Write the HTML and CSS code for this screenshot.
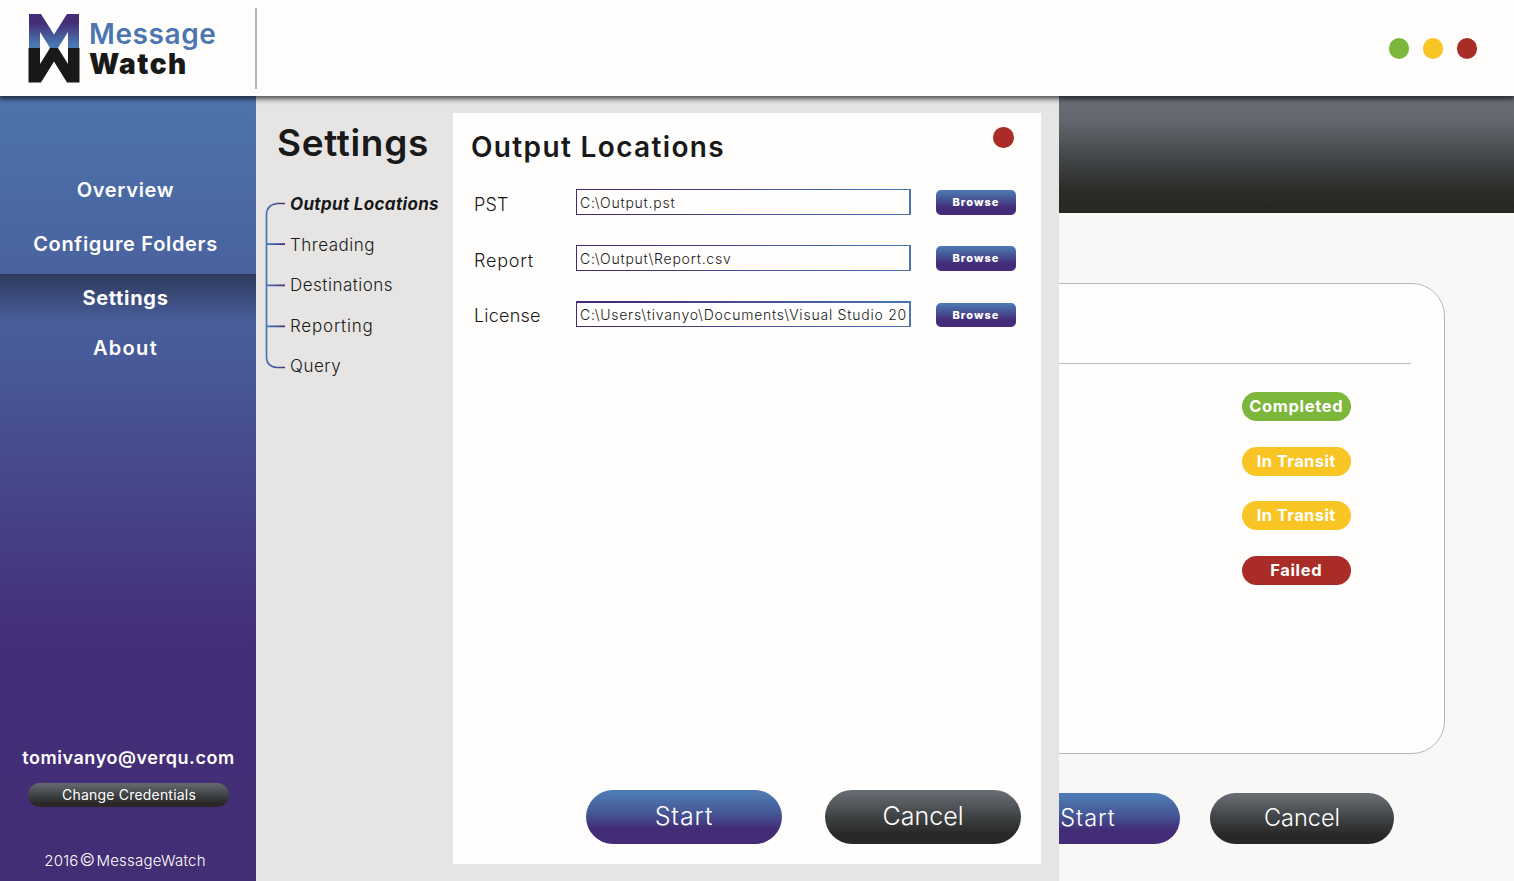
FILE: index.html
```html
<!DOCTYPE html>
<html lang="en">
<head>
<meta charset="utf-8">
<title>MessageWatch</title>
<link rel="stylesheet" href="styles.css">
</head>
<body>
<div class="app">
  <header class="header">
    <div class="brand">
      <svg class="logo" width="52" height="70" viewBox="0 0 52 70">
        <defs>
          <linearGradient id="logoFill" x1="0" y1="0" x2="0" y2="1">
            <stop offset="0.25" stop-color="#442c77"/>
            <stop offset="0.9" stop-color="#4a78b3"/>
          </linearGradient>
        </defs>
        <path fill="url(#logoFill)" d="M1 1H13L26 21.500L39 1H51V35H40V19L30 35H22L12 19V35H1Z"/>
        <path fill="#191919" d="M0.500 35H12V51L22 35H30L40 51V35H51.500V69.500H39L26 48.500L13 69.500H0.500Z"/>
      </svg>
      <div class="wordmark">
        <span class="word-message">Message</span>
        <span class="word-watch">Watch</span>
      </div>
    </div>
    <div class="window-dots">
      <span class="dot green"></span>
      <span class="dot yellow"></span>
      <span class="dot red"></span>
    </div>
  </header>

  <div class="body">
    <aside class="sidebar">
      <nav class="nav">
        <a class="nav-item">Overview</a>
        <a class="nav-item">Configure Folders</a>
        <a class="nav-item active">Settings</a>
        <a class="nav-item about">About</a>
      </nav>
      <div class="account">
        <div class="email">tomivanyo@verqu.com</div>
        <button class="credentials">Change Credentials</button>
        <div class="copyright">2016<span class="copy-mark">©</span>MessageWatch</div>
      </div>
    </aside>

    <main class="main">
      <div class="banner"></div>
      <section class="card">
        <div class="card-head"></div>
        <div class="statuses">
          <span class="pill green">Completed</span>
          <span class="pill yellow transit">In Transit</span>
          <span class="pill yellow transit">In Transit</span>
          <span class="pill red">Failed</span>
        </div>
      </section>
      <div class="main-actions">
        <button class="action small primary">Start</button>
        <button class="action small dark">Cancel</button>
      </div>
    </main>

    <section class="settings">
      <div class="settings-menu">
        <h1 class="settings-title">Settings</h1>
        <div class="tree">
          <svg class="tree-lines" width="22" height="168" viewBox="0 0 22 168" fill="none" stroke-width="1.700">
            <defs>
              <linearGradient id="branch" gradientUnits="userSpaceOnUse" x1="2" y1="0" x2="20" y2="0">
                <stop offset="0" stop-color="#4b76b3"/>
                <stop offset="1" stop-color="#432b77"/>
              </linearGradient>
            </defs>
            <g stroke="url(#branch)">
              <path d="M20 1.500H12.500Q1.500 2.500 1.500 13V155Q1.500 164.500 12 165.500H20"/>
              <path d="M2 42.200H20M2 83.400H20M2 124.300H20"/>
            </g>
          </svg>
          <ul class="tree-items">
            <li class="current">Output Locations</li>
            <li>Threading</li>
            <li>Destinations</li>
            <li class="loose">Reporting</li>
            <li>Query</li>
          </ul>
        </div>
      </div>

      <div class="sheet">
        <div class="sheet-head">
          <h2 class="sheet-title">Output Locations</h2>
          <span class="dot red"></span>
        </div>
        <div class="fields">
          <label class="label">PST</label>
          <div class="field">C:\Output.pst</div>
          <button class="browse">Browse</button>
          <label class="label loose">Report</label>
          <div class="field">C:\Output\Report.csv</div>
          <button class="browse">Browse</button>
          <label class="label last">License</label>
          <div class="field thick">C:\Users\tivanyo\Documents\Visual Studio 20</div>
          <button class="browse last">Browse</button>
        </div>
        <div class="sheet-actions">
          <button class="action primary">Start</button>
          <button class="action dark">Cancel</button>
        </div>
      </div>
    </section>
  </div>
</div>
</body>
</html>
```
FILE: styles.css
```css
* { box-sizing: border-box; }

body {
  margin: 0;
  font-family: Inter, "Open Sans", "Liberation Sans", sans-serif;
  color: #191919;
  background: #f9f8f8;
}

button {
  border: 0;
  padding: 0;
  font-family: inherit;
  color: #fff;
}

.app {
  display: flex;
  flex-direction: column;
  width: 1514px;
  height: 881px;
  overflow: hidden;
  white-space: nowrap;
}

/* Header */
.header {
  position: relative;
  z-index: 3;
  flex: none;
  height: 96px;
  display: flex;
  justify-content: space-between;
  padding-right: 37px;
  background: #fffefd;
  box-shadow: 0 2px 5px 1px rgba(0, 0, 0, 0.65);
}

.brand {
  display: flex;
  align-items: flex-start;
  width: 257px;
  height: 81px;
  margin-top: 8px;
  padding: 5px 0 0 28px;
  border-right: 2px solid #b4b4b4;
}

.wordmark {
  display: flex;
  flex-direction: column;
  margin: 6px 0 0 9px;
  font-size: 28px;
  line-height: 30px;
}

.word-message {
  color: #4b76b2;
  font-weight: 600;
  letter-spacing: 0.6px;
}

.word-watch {
  font-weight: 900;
  letter-spacing: 1.500px;
}

.window-dots {
  display: flex;
  gap: 13.300px;
  padding-top: 38px;
}

.dot {
  display: block;
  width: 20.500px;
  height: 20.500px;
  border-radius: 50%;
}

.green { background: #7cb63b; }
.yellow { background: #f8c525; }
.red { background: #a92c26; }

.body {
  position: relative;
  flex: 1;
  display: flex;
  min-height: 0;
}

/* Sidebar */
.sidebar {
  width: 256px;
  flex: none;
  display: flex;
  flex-direction: column;
  justify-content: space-between;
  color: #fff;
  background: linear-gradient(#4d74ac 0, #4a65a1 150px, #485a98 260px, #442e78 545px, #432d75 100%);
}

.nav {
  display: flex;
  flex-direction: column;
  gap: 6px;
  padding-top: 70px;
}

.nav-item {
  height: 48px;
  padding-right: 5px;
  line-height: 48px;
  font-size: 20px;
  font-weight: 600;
  letter-spacing: 0.68px;
  text-align: center;
}

.nav-item.active {
  height: 47px;
  font-weight: 700;
  background: linear-gradient(#2d3a5c, #495d9a);
}

.nav-item.about {
  margin-top: -3px;
  letter-spacing: 1.300px;
}

.account {
  display: flex;
  flex-direction: column;
  align-items: center;
  padding-bottom: 10px;
}

.email {
  padding-left: 1px;
  line-height: 24px;
  font-size: 18px;
  font-weight: 600;
  letter-spacing: 0.55px;
}

.credentials {
  width: 201px;
  height: 24px;
  margin: 13px 0 0 1px;
  padding: 0 0 1px 1px;
  border-radius: 12px;
  font-size: 14px;
  letter-spacing: 0.2px;
  background: linear-gradient(#666b72, #3c3f40 55%, #292826 85%);
}

.copyright {
  margin: 44px 6px 0 0;
  line-height: 20px;
  font-size: 15px;
  font-weight: 300;
  letter-spacing: 0.25px;
}

.copy-mark {
  margin: 0 1px;
  font-size: 17px;
  line-height: 1;
}

/* Main area behind the settings panel */
.main {
  flex: 1;
  background: #f9f8f7;
}

.banner {
  height: 117px;
  background: linear-gradient(#6a6e78 0, #63676f 20%, #3f4243 58%, #2c2c29 80%, #272721 100%);
}

.card {
  width: 1119px;
  height: 471px;
  margin: 70px 0 0 70px;
  border: 1px solid #b7b7b7;
  border-radius: 33px;
  background: #fffefd;
}

.card-head {
  height: 80px;
  margin: 0 33px;
  border-bottom: 1px solid #b9b9b9;
}

.statuses {
  display: flex;
  flex-direction: column;
  align-items: flex-end;
  gap: 25.500px;
  padding: 28px 93.500px 0 0;
}

.pill {
  width: 108.500px;
  height: 29px;
  border-radius: 15px;
  line-height: 29px;
  font-size: 16.500px;
  font-weight: 700;
  letter-spacing: 0.65px;
  text-align: center;
  color: #fff;
}

.pill.transit { letter-spacing: 0.42px; }

.main-actions {
  display: flex;
  gap: 30px;
  padding: 39px 0 0 740px;
}

.action {
  width: 196px;
  height: 54px;
  padding-bottom: 3px;
  border-radius: 27px;
  font-size: 25px;
  font-weight: 300;
}

.action.small {
  width: 184px;
  height: 51px;
  font-size: 23.500px;
}

.primary {
  letter-spacing: 0.95px;
  background: linear-gradient(#4d78b1 8%, #455594 45%, #442c77 72%);
}

.dark { background: linear-gradient(#666b71 5%, #3b3e3f 55%, #292826 82%); }

/* Settings panel */
.settings {
  position: absolute;
  top: 0;
  left: 256px;
  width: 803px;
  height: 785px;
  display: flex;
  padding: 17px 18px 17px 0;
  background: #e6e5e4;
}

.settings-menu { width: 197px; }

.settings-title {
  margin: 7px 0 0 21px;
  font-size: 37px;
  line-height: 46px;
  font-weight: 600;
  letter-spacing: 0.65px;
}

.tree {
  display: flex;
  padding: 36px 0 0 9px;
}

.tree-items {
  display: flex;
  flex-direction: column;
  gap: 20.600px;
  margin: -8px 0 0 3px;
  padding: 0;
  list-style: none;
  font-size: 17px;
  line-height: 20px;
  font-weight: 300;
  letter-spacing: 0.5px;
}

.tree-items .current {
  font-weight: 700;
  font-style: italic;
  letter-spacing: 0.33px;
}

.tree-items .loose,
.label.loose { letter-spacing: 0.8px; }

.sheet {
  width: 588px;
  display: flex;
  flex-direction: column;
  background: #fffefd;
}

.sheet-head {
  display: flex;
  justify-content: space-between;
  padding: 14px 27.500px 0 18px;
}

.sheet-title {
  margin: 0;
  padding-top: 2px;
  font-size: 28px;
  line-height: 36px;
  font-weight: 600;
  letter-spacing: 1.350px;
}

.fields {
  display: grid;
  grid-template-columns: 102px 335px 80px;
  grid-auto-rows: 26px;
  row-gap: 30px;
  padding: 24px 0 0 21px;
}

.label {
  padding-top: 4px;
  font-size: 18px;
  line-height: 24px;
  font-weight: 300;
  letter-spacing: 0.2px;
}

.label.last { padding-top: 3px; }

.field {
  padding-left: 3px;
  border: 1px solid;
  border-right-width: 2px;
  border-image: linear-gradient(90deg, #442c77 10%, #4a76b2) 1 2 1 1;
  font-size: 14px;
  line-height: 26px;
  font-weight: 300;
  letter-spacing: 0.77px;
}

.field.thick {
  border-top-width: 2px;
  border-image-slice: 2 2 1 1;
  line-height: 24px;
}

.browse {
  width: 80px;
  height: 24.500px;
  margin: 1px 0 0 25px;
  border-radius: 5px;
  font-size: 11px;
  font-weight: 800;
  letter-spacing: 1.050px;
  background: linear-gradient(#4b77af 5%, #442c77 72%);
}

.browse.last {
  height: 24px;
  margin-top: 2px;
}

.sheet-actions {
  display: flex;
  gap: 43px;
  margin-top: auto;
  padding: 0 0 20px 133px;
}
```
